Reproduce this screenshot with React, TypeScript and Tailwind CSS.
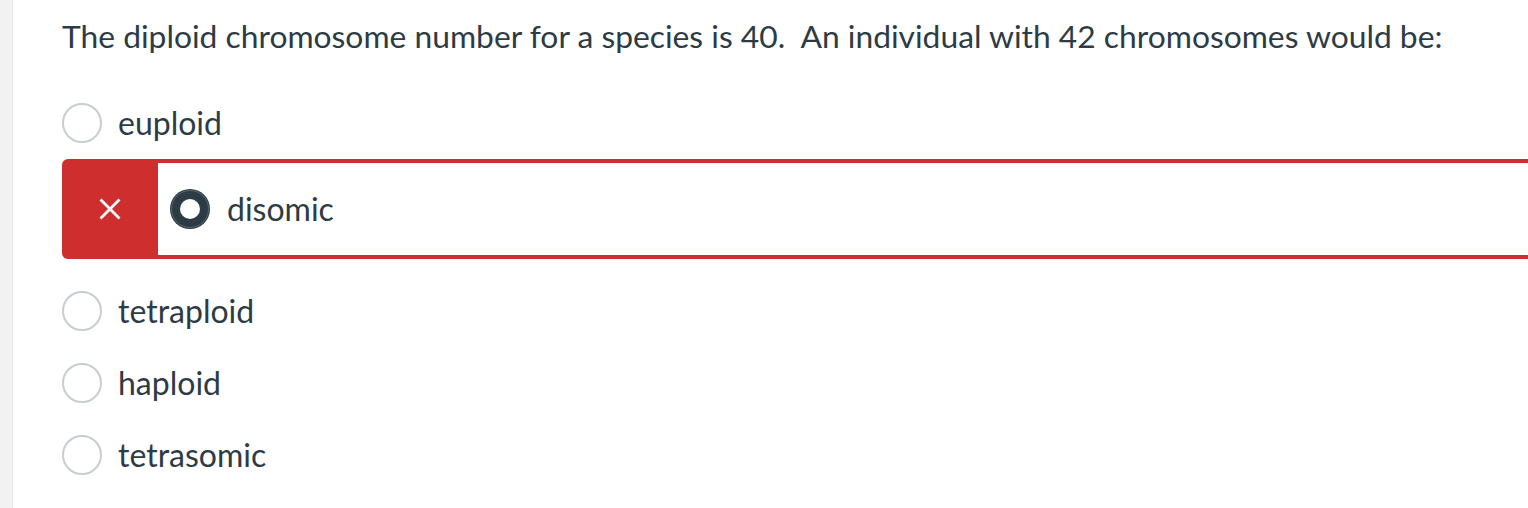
import React from "react";

function Radio() {
  return (
    <span className="block w-[40px] h-[40px] rounded-full border-2 border-[#c7cdd1] bg-white shrink-0" />
  );
}

function Option({ label }: { label: string }) {
  return (
    <div className="flex items-center h-[72px]">
      <Radio />
      <span className="ml-[16px] text-[32px] leading-[40px] text-[#2d3b45]">{label}</span>
    </div>
  );
}

export default function App() {
  return (
    <div className="flex w-[1528px] h-[508px] bg-white overflow-hidden" style={{ fontFamily: "Lato, 'Noto Sans', sans-serif" }}>
      <div className="w-[13px] shrink-0 bg-[#f2f2f2] border-r border-[#e8e8e8]" />
      <div className="flex-1 pl-[49px] min-w-0">
        <div className="h-[87px] pt-[16px]">
          <p className="text-[31.8px] leading-[40px] text-[#2d3b45] whitespace-nowrap">
            The diploid chromosome number for a species is 40.&nbsp; An individual with 42 chromosomes would be:
          </p>
        </div>
        <Option label="euploid" />
        <div className="flex h-[100px] w-[1480px] rounded-l-[6px] bg-[#cf2e2e]">
          <div className="w-[96px] flex items-center justify-center shrink-0">
            <svg width="22" height="22" viewBox="0 0 22 22" fill="none">
              <path d="M1.5 1.5L20.5 20.5M20.5 1.5L1.5 20.5" stroke="white" strokeWidth="2.8" strokeLinecap="butt" />
            </svg>
          </div>
          <div className="flex-1 bg-white my-[4px] flex items-center pl-[12px]">
            <span className="relative block w-[40px] h-[40px] rounded-full bg-[#2d3b45] shrink-0">
              <span className="absolute inset-[1px] rounded-full border border-[#9aa3aa] opacity-40" />
              <span className="absolute left-[10px] top-[10px] w-[20px] h-[20px] rounded-full bg-white" />
            </span>
            <span className="ml-[17px] text-[32px] leading-[40px] text-[#2d3b45]">disomic</span>
          </div>
        </div>
        <div className="h-[16px]" />
        <Option label="tetraploid" />
        <Option label="haploid" />
        <Option label="tetrasomic" />
      </div>
    </div>
  );
}
